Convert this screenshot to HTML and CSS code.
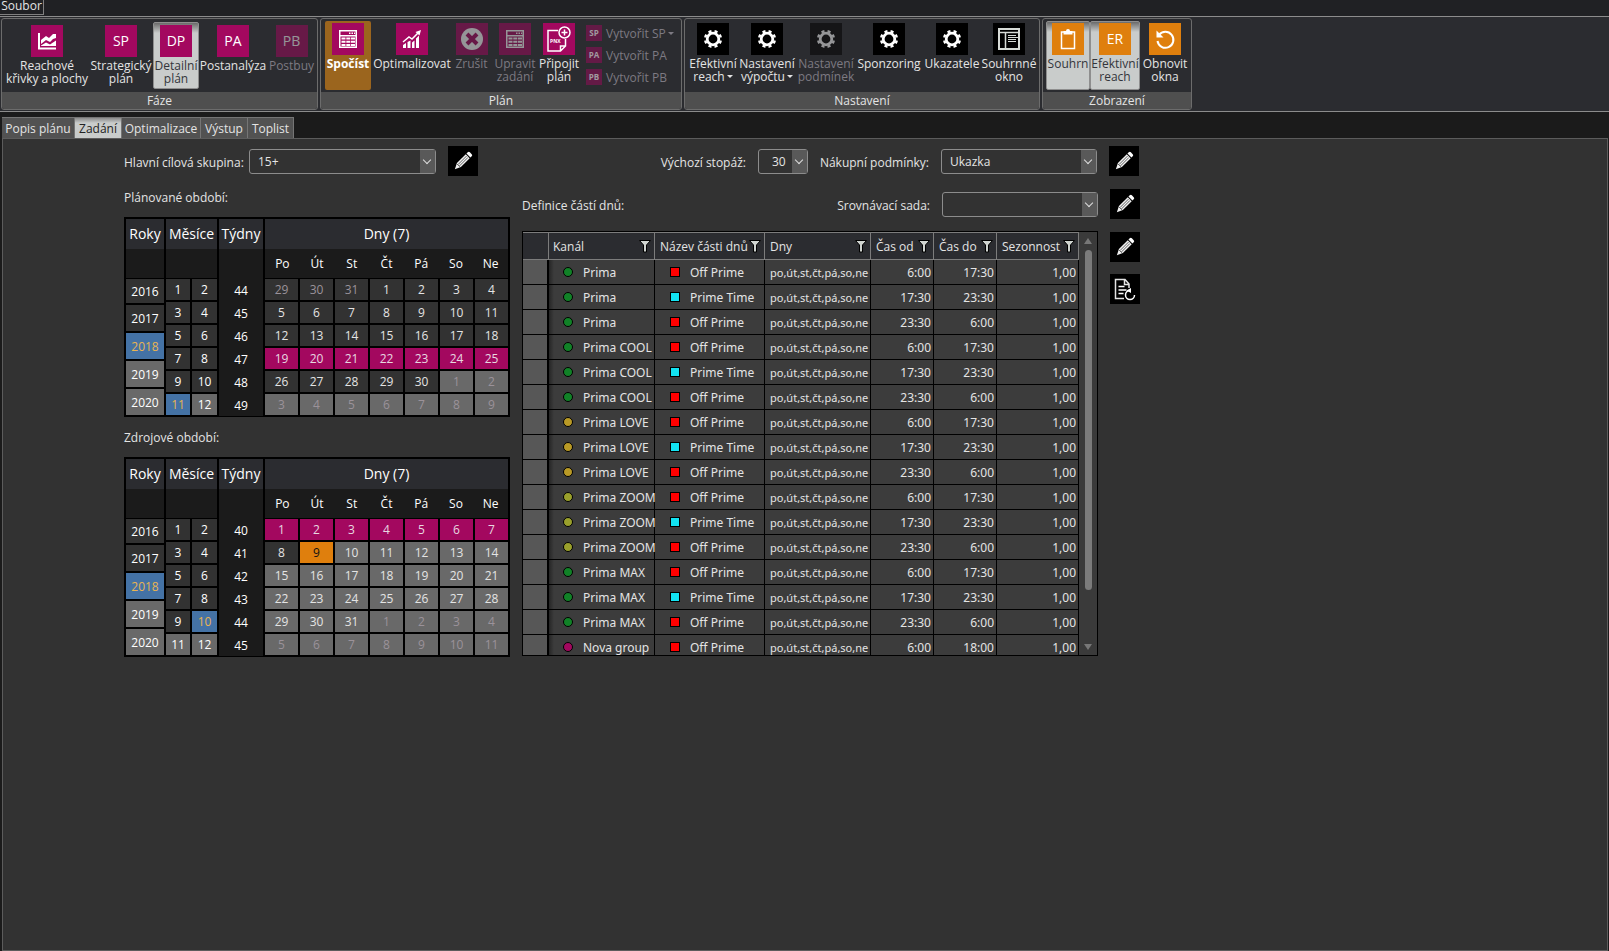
FILE: index.html
```html
<!DOCTYPE html>
<html lang="cs">
<head>
<meta charset="utf-8">
<title>Detailní plán</title>
<link rel="stylesheet" href="styles.css">
</head>
<body>
<svg class="defs" aria-hidden="true">
  <symbol id="gear" viewBox="0 0 32 32"><circle cx="16" cy="16" r="5.800" fill="none" stroke="currentColor" stroke-width="2.800"/><circle cx="16" cy="16" r="7.900" fill="none" stroke="currentColor" stroke-width="2.400" pathLength="16" stroke-dasharray="1 1" stroke-dashoffset="-.5"/></symbol>
  <symbol id="calc" viewBox="0 0 32 32"><path fill="none" stroke="currentColor" stroke-width="1.500" d="M7.750 7.750h16.500v16.500H7.750z"/><path fill="currentColor" d="M8 12h16v1.500H8zM17 9.500h1.500v1.500H17zm2.500 0H21v1.500h-1.500zm2.500 0h1v1.500h-1zM9.500 14.500h4v2h-4zm4.800 0h4v2h-4zm4.700 0h4v2h-4zM9.500 17.700h4v2h-4zm4.800 0h4v2h-4zm4.700 0h4v2h-4zM9.500 21h4v2h-4zm4.800 0h4v2h-4zm4.700 0h4v2h-4z"/></symbol>
  <symbol id="pencil" viewBox="0 0 30 30"><g transform="rotate(45 15 15)"><path fill="#fff" d="M12.200 5.500q0-1.500 1.500-1.500h2.600q1.500 0 1.500 1.500v1.800h-5.600z"/><path fill="#f2f2f2" d="M12.200 8.300h5.600v12.500l-2.800 5.700-2.800-5.700z"/><path fill="none" stroke="#444" stroke-width=".8" d="M14 9v12M16 9v12M13 21.300h4"/></g></symbol>
  <symbol id="funnel" viewBox="0 0 12 14"><path fill="#d0d4d0" stroke="#000" d="M.5 1.500h11L7.500 6v7h-3V6z"/></symbol>
</svg>

<header class="menubar"><button class="file">Soubor</button></header>

<div class="ribbon">
  <section class="group low">
    <div class="tools">
      <button class="tool w84"><svg class="tile pink" viewBox="0 0 32 32"><path fill="none" stroke="#fff" stroke-width="2" d="M8 8v15.500h17"/><path fill="#fff" d="M10 15l5-4 3 2 4-4 3 0v4l-3 1-3 3-4-2-5 4z"/><path fill="#fff" d="M10 20.500l5-3 4 2 6-4v5.500H10z"/></svg><span>Reachové<br>křivky a plochy</span></button>
      <button class="tool w64"><span class="tile pink">SP</span><span>Strategický<br>plán</span></button>
      <button class="tool w46 on"><span class="tile pink">DP</span><span>Detailní<br>plán</span></button>
      <button class="tool w68"><span class="tile pink">PA</span><span>Postanalýza</span></button>
      <button class="tool w49" disabled><span class="tile pink">PB</span><span>Postbuy</span></button>
    </div>
    <h2>Fáze</h2>
  </section>
  <section class="group">
    <div class="tools plan">
      <button class="tool w46 run"><svg class="tile pink"><use href="#calc"/></svg><span>Spočíst</span></button>
      <button class="tool w82"><svg class="tile pink" viewBox="0 0 32 32"><path fill="#fff" d="M7 22l3-2v5H7zM11.500 19l3-1.500V25h-3zM16 19.500l2.500-2V25H16zM20 15.500l3-3V25h-3z"/><path fill="none" stroke="#fff" stroke-width="1.500" d="M7 19l6-5 3 2 7-7"/><path fill="#fff" d="M19.500 9l5.500-2-1.500 5.500z"/></svg><span>Optimalizovat</span></button>
      <button class="tool w37" disabled><svg class="tile pink" viewBox="0 0 32 32"><circle cx="16" cy="16" r="11" fill="#fff"/><path stroke="#a3085f" stroke-width="4" d="M11 11l10 10M21 11L11 21"/></svg><span>Zrušit</span></button>
      <button class="tool w50" disabled><svg class="tile pink"><use href="#calc"/></svg><span>Upravit<br>zadání</span></button>
      <button class="tool w38"><svg class="tile pink" viewBox="0 0 32 32"><path fill="none" stroke="#fff" stroke-width="1.500" d="M15 7.500H5v20.500h12.500l5-5V16M17.500 28v-5h5"/><circle cx="21.500" cy="9.500" r="5.500" fill="none" stroke="#fff" stroke-width="1.500"/><path stroke="#fff" stroke-width="1.500" d="M21.500 6.500v6M18.500 9.500h6"/><text x="7" y="19.500" class="pnx">PNX</text></svg><span>Připojit<br>plán</span></button>
      <div class="minis">
        <button class="mini" disabled><span class="chip">SP</span>Vytvořit SP<i class="caret"></i></button>
        <button class="mini" disabled><span class="chip">PA</span>Vytvořit PA</button>
        <button class="mini" disabled><span class="chip">PB</span>Vytvořit PB</button>
      </div>
    </div>
    <h2>Plán</h2>
  </section>
  <section class="group">
    <div class="tools setup">
      <button class="tool w54"><svg class="tile black"><use href="#gear"/></svg><span>Efektivní<br>reach<i class="caret"></i></span></button>
      <button class="tool w54"><svg class="tile black"><use href="#gear"/></svg><span>Nastavení<br>výpočtu<i class="caret"></i></span></button>
      <button class="tool w64" disabled><svg class="tile black"><use href="#gear"/></svg><span>Nastavení<br>podmínek</span></button>
      <button class="tool w62"><svg class="tile black"><use href="#gear"/></svg><span>Sponzoring</span></button>
      <button class="tool w64"><svg class="tile black"><use href="#gear"/></svg><span>Ukazatele</span></button>
      <button class="tool w50"><svg class="tile black" viewBox="0 0 32 32"><path fill="none" stroke="#d8dcd8" stroke-width="2" d="M6 6h20v20H6z"/><path fill="none" stroke="#d8dcd8" d="M6 9.500h20M12.500 9v17" stroke-width="1.500"/><path stroke="#d8dcd8" d="M15 12.500h8M15 14.500h10M15 16.500h8M15 18.500h8"/></svg><span>Souhrnné<br>okno</span></button>
    </div>
    <h2>Nastavení</h2>
  </section>
  <section class="group">
    <div class="tools">
      <button class="tool w44 on"><svg class="tile orange" viewBox="0 0 32 32"><path fill="none" stroke="#fff" stroke-width="1.500" d="M9.500 9h13v16.500h-13z"/><path fill="#fff" d="M11.500 8h2.500a2 2 0 0 1 4 0h2.500v3.500h-9z"/></svg><span>Souhrn</span></button>
      <button class="tool w50 on"><span class="tile orange">ER</span><span>Efektivní<br>reach</span></button>
      <button class="tool w50"><svg class="tile orange" viewBox="0 0 32 32"><path fill="none" stroke="#fff" stroke-width="2" d="M10 12a8 8 0 1 1-1.500 6"/><path fill="#fff" d="M7.500 7.500v7h7z"/></svg><span>Obnovit<br>okna</span></button>
    </div>
    <h2>Zobrazení</h2>
  </section>
</div>

<nav class="tabs">
  <button class="tab w73">Popis plánu</button><button class="tab w47 active">Zadání</button><button class="tab w79">Optimalizace</button><button class="tab w47">Výstup</button><button class="tab w46">Toplist</button>
</nav>

<main class="page">
  <div class="left">
    <div class="field target">
      <label for="target">Hlavní cílová skupina:</label>
      <span class="combo wide"><select id="target"><option>15+</option></select></span>
      <button class="icon" aria-label="Upravit cílovou skupinu"><svg><use href="#pencil"/></svg></button>
    </div>
    <h3>Plánované období:</h3>
    <div class="calendar" id="planned"></div>
    <h3 class="second">Zdrojové období:</h3>
    <div class="calendar" id="source"></div>
  </div>

  <div class="right">
    <div class="field top">
      <label for="length">Výchozí stopáž:</label>
      <span class="combo short"><select id="length"><option>30</option></select></span>
      <label for="terms">Nákupní podmínky:</label>
      <span class="combo medium"><select id="terms"><option>Ukazka</option></select></span>
      <button class="icon" aria-label="Upravit nákupní podmínky"><svg><use href="#pencil"/></svg></button>
    </div>
    <div class="field sets">
      <span class="caption">Definice částí dnů:</span>
      <label for="set">Srovnávací sada:</label>
      <span class="combo medium"><select id="set"><option></option></select></span>
      <button class="icon" aria-label="Upravit srovnávací sadu"><svg><use href="#pencil"/></svg></button>
    </div>
    <div class="dayparts">
      <div class="gridbox">
        <table>
          <colgroup><col class="c0"><col class="c1"><col class="c2"><col class="c3"><col class="c4"><col class="c4"><col class="c5"></colgroup>
          <thead><tr><th></th><th>Kanál</th><th>Název části dnů</th><th>Dny</th><th>Čas od</th><th>Čas do</th><th>Sezonnost</th></tr></thead>
          <tbody id="rows"></tbody>
        </table>
        <div class="scroll"><i class="up"></i><i class="thumb"></i><i class="down"></i></div>
      </div>
      <div class="side">
        <button class="icon" aria-label="Upravit části dnů"><svg><use href="#pencil"/></svg></button>
        <button class="icon" aria-label="Obnovit části dnů"><svg viewBox="0 0 30 30"><path fill="none" stroke="#e4e4e4" stroke-width="1.500" d="M14 24.500H5.500v-19h9.500l4 4.500v4M14.500 6v4.500h4"/><path stroke="#fff" stroke-width="1.500" d="M8.500 12.500h6M8.500 16h8M8.500 19.500h5"/><path fill="none" stroke="#fff" stroke-width="1.500" d="M24.500 21a4.500 4.500 0 1 1-4.500-4.500"/><path fill="#fff" d="M16.500 16.500l4.500-2.500v5z"/></svg></button>
      </div>
    </div>
  </div>
</main>
<script src="app.js"></script>
</body>
</html>
```

FILE: styles.css
```css
* { box-sizing: border-box; }
body {
  margin: 0;
  min-height: 100vh;
  display: flex;
  flex-direction: column;
  background: #1b1b1b;
  color: #e4e4e4;
  font: 12px/13px "Open Sans", "Noto Sans", sans-serif;
}
button, select { font: inherit; color: inherit; margin: 0; padding: 0; border: 0; background: none; border-radius: 0; }
h2, h3 { margin: 0; font: inherit; }
.defs { position: absolute; width: 0; height: 0; }

.menubar { display: flex; height: 16px; background: #202124; }
.file { width: 44px; height: 15px; padding-bottom: 2px; line-height: 12px; border: solid #808080; border-width: 0 1px 1px 0; }

.ribbon { display: flex; gap: 2px; padding: 1px; border: solid #8c8c8c; border-width: 1px 0; background: #2b2c30; }
.group { border: 1px solid #6c6c6c; border-radius: 3px; overflow: hidden; }
.group h2 { height: 17px; line-height: 17px; text-align: center; background: #4f4f4f; }
.tools { display: flex; align-items: flex-start; height: 73px; padding: 2px 1px 0 3px; }
.plan { padding-left: 4px; padding-right: 4px; }
.setup { padding: 2px 5px 0 1px; }
.tool { display: flex; flex-direction: column; align-items: center; height: 69px; padding-top: 2px; text-align: center; white-space: nowrap; border-radius: 2px; }
.tile { flex: none; width: 32px; height: 32px; margin-bottom: 2px; line-height: 32px; font-size: 14px; color: #fff; }
.pink { background: #a3085f; }
.black { background: #000; }
.orange { background: #df7f0d; }
.tool:disabled { color: #7d7a82; }
.tool:disabled .tile { opacity: .5; }
.on { background: linear-gradient(#6a6a6a, #c9cccb 10px); color: #33353b; border: 1px solid #8e8e8e; padding-top: 1px; }
.low .tool { padding-top: 4px; }
.low .on { margin-top: 1px; height: 67px; padding-top: 2px; }
.run { background: #9b651e; color: #fff; font-weight: bold; }
.pnx { font: bold 5px "Open Sans", sans-serif; fill: #fff; }
.minis { display: flex; flex-direction: column; gap: 6px; width: 99px; padding: 4px 0 0 8px; }
.mini { display: flex; align-items: center; height: 16px; color: #7d7a82; white-space: nowrap; }
.chip { width: 16px; height: 16px; margin-right: 4px; background: #641a46; color: #a19aa0; font: bold 8px/16px "Open Sans", sans-serif; text-align: center; }
.caret { display: inline-block; margin-left: 2px; vertical-align: 3px; border: solid transparent; border-width: 3px 3px 0; border-top-color: currentColor; }

.w37 { width: 37px; } .w38 { width: 38px; } .w44 { width: 44px; } .w46 { width: 46px; }
.w47 { width: 47px; } .w49 { width: 49px; } .w50 { width: 50px; } .w54 { width: 54px; }
.w62 { width: 62px; } .w64 { width: 64px; } .w68 { width: 68px; } .w73 { width: 73px; }
.w79 { width: 79px; } .w82 { width: 82px; } .w84 { width: 84px; }

.tabs { display: flex; padding: 5px 2px 0; }
.tab { height: 21px; padding-top: 1px; border: solid #757575; border-width: 1px 1px 0 0; background: #525252; white-space: nowrap; }
.active { background: linear-gradient(#8a8a8a, #c9cccb 5px); color: #222; }

.page { flex: 1; display: flex; align-items: flex-start; gap: 12px; margin: 0 1px 0 2px; padding: 7px 0 0 121px; border: 1px solid #5c5c5c; background: #323232; }
.left { width: 386px; }
.right { width: 618px; }
.field { display: flex; align-items: center; height: 30px; white-space: nowrap; }
.field label, .caption { padding-top: 2px; }
.icon { width: 30px; height: 30px; background: #000; flex: none; }
.icon svg { display: block; width: 30px; height: 30px; }
.combo { position: relative; height: 25px; border: 1px solid #8c8c8c; border-radius: 3px; flex: none; }
.combo::before { content: ""; position: absolute; right: 0; top: 0; width: 15px; height: 23px; background: #595959; }
.combo::after { content: ""; position: absolute; right: 5px; top: 7px; width: 5px; height: 5px; border: solid #ddd; border-width: 0 1px 1px 0; transform: rotate(45deg); }
.combo select { appearance: none; position: relative; width: 100%; height: 23px; padding-left: 8px; }
.wide { width: 187px; }
.medium { width: 156px; }
.short { width: 50px; }
.combo.short select { padding-left: 13px; }
.target { justify-content: space-between; margin-right: 32px; }
.target .combo { margin-left: auto; margin-right: 12px; }
.left h3 { margin: 15px 0 12px; line-height: 14px; }
.left h3.second { margin: 14px 0 12px; }
.top .combo, .sets .combo { margin: 0 12px; }
.top { justify-content: flex-end; padding-right: 1px; }
.sets { margin-top: 13px; }
.caption { margin-right: auto; }

.calendar { display: grid; grid-template-columns: 38px 51px 44px 1fr; column-gap: 2px; height: 200px; padding: 1px; border: 1px solid #000; background: #000; color: #fff; }
.col { display: flex; flex-direction: column; }
.head { height: 30px; line-height: 30px; font-size: 14px; text-align: center; background: #2b2c30; white-space: nowrap; }
.sub { display: flex; height: 29px; line-height: 30px; background: #1b1b1b; }
.sub span { flex: 1; text-align: center; }
.cells { display: grid; gap: 2px; margin-top: 1px; height: 136px; }
.years { grid-template-rows: 24px repeat(4, 26px); }
.months { grid-template-columns: 24px 25px; grid-auto-rows: 21px; }
.days { grid-template-columns: repeat(7, 1fr); grid-auto-rows: 21px; color: #e4e4e4; }
.weeks { display: block; height: 138px; margin: 0; background: #1b1b1b; text-align: center; }
.weeks span { display: block; height: 23px; line-height: 25px; }
.cell { background: #323232; text-align: center; }
.off { background: #696969; }
.mute { color: #9b929a; }
.sel { background: #4472a5; color: #e9b452; }
.pick { background: #a3085f; color: #e8d8e0; }
.today { background: #df7f0d; color: #111; }

.dayparts { display: flex; gap: 12px; margin-top: 12px; }
.gridbox { display: flex; width: 576px; height: 425px; overflow: hidden; border: 1px solid #000; background: #323232; }
table { width: 556px; table-layout: fixed; border-collapse: separate; border-spacing: 0; height: max-content; flex: none; font-family: "Noto Sans", sans-serif; }
.c0 { width: 26px; } .c1 { width: 106px; } .c2 { width: 110px; } .c3 { width: 106px; } .c4 { width: 63px; } .c5 { width: 82px; }
th { height: 28px; padding: 0 0 0 5px; background: #2b2c30; border: solid #7c7c7c; border-width: 1px 1px 1px 0; font-weight: normal; font-family: "Open Sans", sans-serif; text-align: left; white-space: nowrap; }
th:nth-child(2) { padding-left: 4px; }
.hd { display: flex; align-items: center; justify-content: space-between; padding-right: 3px; }
.hd svg { width: 12px; height: 14px; flex: none; }
td { height: 25px; padding: 0 2px 0 5px; background: #3c3c3c; border: solid #000; border-width: 0 1px 1px 0; white-space: nowrap; }
td:first-child { background: #575757; border-right-width: 2px; }
td:nth-child(2) { padding-left: 4px; background: linear-gradient(90deg, #262626, #3c3c3c 5px); }
td:nth-child(4) { font-size: 11px; }
td:nth-child(n+5) { text-align: right; }
.mark { display: flex; align-items: center; }
.dot { flex: none; width: 10px; height: 10px; margin: 0 10px; border: 1px solid #000; border-radius: 5px; }
.box { flex: none; width: 10px; height: 10px; margin: 0 10px; border: 1px solid #000; }
.green { background: #118227; } .gold { background: #b99a26; } .olive { background: #9aa02c; } .plum { background: #a3085f; }
.red { background: #f00; } .cyan { background: #12e3f2; }
.scroll { flex: 1; display: flex; flex-direction: column; align-items: center; padding: 6px 0 5px; background: #3a3a3a; }
.up { border: solid transparent; border-width: 0 4px 6px; border-bottom-color: #777; }
.thumb { width: 7px; height: 340px; margin: 6px 0 auto; border-radius: 4px; background: #7b7b7b; }
.down { border: solid transparent; border-width: 6px 4px 0; border-top-color: #777; }
.side { display: flex; flex-direction: column; gap: 12px; padding-top: 1px; }
```

FILE: app.js
```js
const range = (from, to) => Array.from({ length: to - from + 1 }, (_, i) => from + i);
const cell = (text, cls) => `<button class="cell ${cls}">${text}</button>`;

function calendar(id, { month, firstWeek, days, dayClass }) {
  const years = range(2016, 2020).map(y => cell(y, y === 2018 ? 'sel' : y > 2018 ? 'off' : ''));
  const months = range(1, 12).map(m => cell(m, m === month ? 'sel' : m > month ? 'off' : ''));
  const weeks = range(firstWeek, firstWeek + 5).map(w => `<span>${w}</span>`);
  const names = ['Po', 'Út', 'St', 'Čt', 'Pá', 'So', 'Ne'].map(n => `<span>${n}</span>`);
  document.getElementById(id).innerHTML = `
    <div class="col"><div class="head">Roky</div><div class="sub"></div><div class="cells years">${years.join('')}</div></div>
    <div class="col"><div class="head">Měsíce</div><div class="sub"></div><div class="cells months">${months.join('')}</div></div>
    <div class="col"><div class="head">Týdny</div><div class="sub"></div><div class="weeks">${weeks.join('')}</div></div>
    <div class="col"><div class="head">Dny (7)</div><div class="sub">${names.join('')}</div>
      <div class="cells days">${days.map((d, i) => cell(d, dayClass(i))).join('')}</div></div>`;
}

calendar('planned', {
  month: 11,
  firstWeek: 44,
  days: [...range(29, 31), ...range(1, 30), ...range(1, 9)],
  dayClass: i => i < 3 ? 'mute' : i >= 33 ? 'off mute' : i >= 21 && i < 28 ? 'pick' : '',
});
calendar('source', {
  month: 10,
  firstWeek: 40,
  days: [...range(1, 31), ...range(1, 11)],
  dayClass: i => i < 7 ? 'pick' : i === 7 ? '' : i === 8 ? 'today' : i < 31 ? 'off' : 'off mute',
});

const slots = [['Off Prime', 'red', '6:00', '17:30'], ['Prime Time', 'cyan', '17:30', '23:30'], ['Off Prime', 'red', '23:30', '6:00']];
const channels = [['Prima', 'green'], ['Prima COOL', 'green'], ['Prima LOVE', 'gold'], ['Prima ZOOM', 'olive'], ['Prima MAX', 'green']];
const rows = channels.flatMap(c => slots.map(s => [...c, ...s]));
rows.push(['Nova group', 'plum', 'Off Prime', 'red', '6:00', '18:00']);
document.getElementById('rows').innerHTML = rows.map(([name, dot, part, box, from, to]) => `<tr><td></td>
  <td><div class="mark"><i class="dot ${dot}"></i>${name}</div></td>
  <td><div class="mark"><i class="box ${box}"></i>${part}</div></td>
  <td>po,út,st,čt,pá,so,ne</td><td>${from}</td><td>${to}</td><td>1,00</td></tr>`).join('');

document.querySelectorAll('th').forEach(th => {
  if (th.textContent) {
    th.innerHTML = `<div class="hd">${th.textContent}<svg><use href="#funnel"/></svg></div>`;
  }
});
```
